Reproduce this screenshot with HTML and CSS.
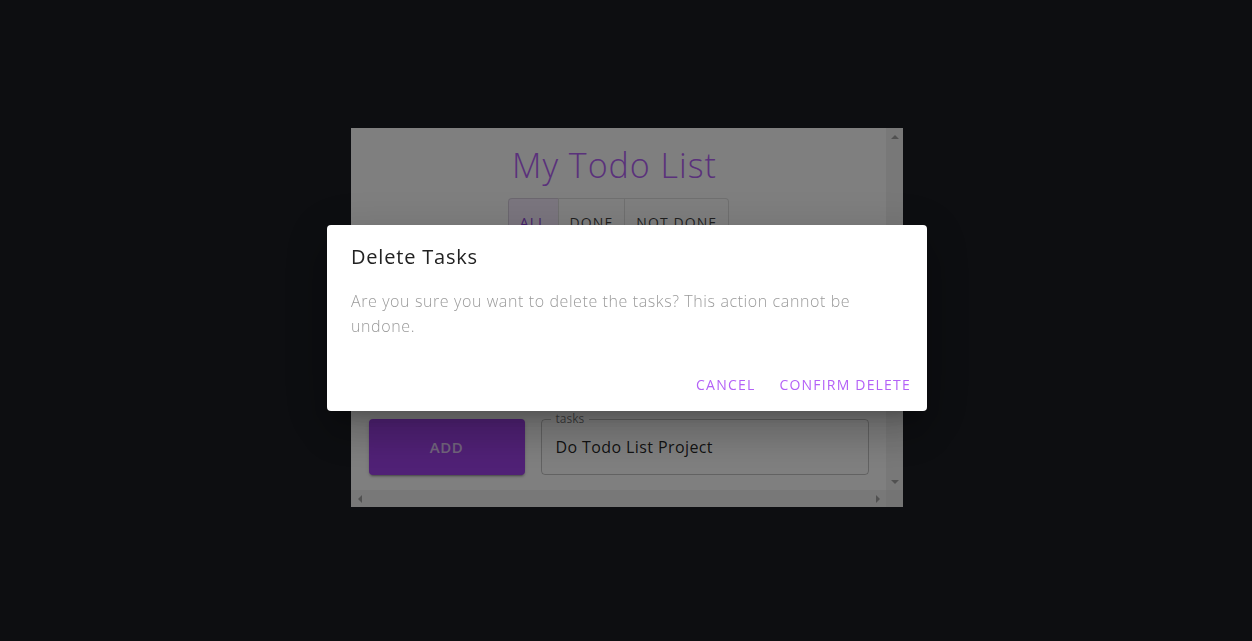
FILE: index.html
```html
<!DOCTYPE html>
<html lang="en">
<head>
<meta charset="utf-8">
<title>My Todo List</title>
<link rel="stylesheet" href="styles.css">
</head>
<body>
<main class="page">
  <section class="frame">
    <div class="frame-content">
      <h1 class="app-title">My Todo List</h1>
      <div class="toggle-group">
        <button class="toggle selected">All</button>
        <button class="toggle">Done</button>
        <button class="toggle">Not Done</button>
      </div>
      <ul class="task-list"></ul>
      <form class="add-row">
        <button type="button" class="add-btn">Add</button>
        <fieldset class="field">
          <legend class="field-label">tasks</legend>
          <span class="field-value">Do Todo List Project</span>
        </fieldset>
      </form>
    </div>
    <div class="vbar">
      <span class="arrow arrow-up"></span>
      <span class="arrow arrow-down"></span>
    </div>
    <div class="hbar">
      <span class="arrow arrow-left"></span>
      <span class="arrow arrow-right"></span>
    </div>
    <div class="corner"></div>
  </section>
</main>

<div class="backdrop">
  <div class="dialog" role="dialog">
    <h2 class="dialog-title">Delete Tasks</h2>
    <p class="dialog-text">Are you sure you want to delete the tasks? This action cannot be undone.</p>
    <div class="dialog-actions">
      <button class="text-btn">Cancel</button>
      <button class="text-btn">Confirm Delete</button>
    </div>
  </div>
</div>
</body>
</html>
```

FILE: styles.css
```css
* { box-sizing: border-box; }

html, body {
  margin: 0;
  height: 100%;
}

body {
  background: #1a1c22;
  font-family: "Open Sans", "Liberation Sans", sans-serif;
}

.page {
  min-height: 100vh;
  display: flex;
  align-items: center;
  justify-content: center;
  padding: 0 0 6px 2px;
}

.frame {
  width: 552px;
  height: 379px;
  background: #ffffff;
  display: grid;
  grid-template-columns: 1fr 17px;
  grid-template-rows: 1fr 17px;
}

.frame-content {
  display: flex;
  flex-direction: column;
  align-items: center;
  overflow: hidden;
}

.app-title {
  margin: 16px 0 0;
  padding-right: 8px;
  font-size: 34px;
  line-height: 42px;
  font-weight: 300;
  letter-spacing: 1px;
  color: #b462f7;
}

.toggle-group {
  margin-top: 12px;
  display: flex;
  border-radius: 4px;
}

.toggle {
  font-family: inherit;
  font-size: 14px;
  font-weight: 500;
  text-transform: uppercase;
  letter-spacing: 1.1px;
  height: 48px;
  padding: 0 11px;
  background: #fff;
  color: rgba(0, 0, 0, 0.75);
  border: 1px solid rgba(0, 0, 0, 0.12);
  margin-left: -1px;
}

.toggle:first-child {
  margin-left: 0;
  border-radius: 4px 0 0 4px;
}

.toggle:last-child {
  border-radius: 0 4px 4px 0;
}

.toggle.selected {
  color: #8e44d6;
  background: rgba(180, 98, 247, 0.12);
}

.task-list {
  list-style: none;
  margin: 0;
  padding: 0;
  height: 173px;
  flex: none;
}

.add-row {
  width: 500px;
  display: flex;
  gap: 16px;
  margin: 0;
}

.add-btn {
  width: 156px;
  height: 56px;
  flex: none;
  border: none;
  border-radius: 4px;
  background: #a142ec;
  color: rgba(255, 255, 255, 0.72);
  font-family: inherit;
  font-size: 15px;
  font-weight: 600;
  letter-spacing: 0.6px;
  text-transform: uppercase;
  box-shadow: 0 3px 1px -2px rgba(0,0,0,0.2), 0 2px 2px 0 rgba(0,0,0,0.14), 0 1px 5px 0 rgba(0,0,0,0.12);
}

.field {
  flex: 1;
  height: 56px;
  margin: 0;
  padding: 0 14px;
  border: 1px solid rgba(0, 0, 0, 0.23);
  border-radius: 4px;
  position: relative;
  display: flex;
  align-items: center;
  min-width: 0;
}

.field-label {
  position: absolute;
  top: -9px;
  left: 9px;
  padding: 0 5px;
  background: #fff;
  font-size: 12px;
  line-height: 16px;
  color: rgba(0, 0, 0, 0.55);
  font-weight: 400;
}

.field-value {
  font-size: 16px;
  letter-spacing: 0.4px;
  color: rgba(0, 0, 0, 0.87);
  font-weight: 400;
}

.vbar {
  background: #f1f1f1;
  display: flex;
  flex-direction: column;
  justify-content: space-between;
  align-items: center;
}

.hbar {
  background: #f1f1f1;
  display: flex;
  justify-content: space-between;
  align-items: center;
}

.corner {
  background: #e8e8e8;
}

.arrow {
  width: 17px;
  height: 17px;
  display: flex;
  align-items: center;
  justify-content: center;
}

.arrow::before {
  content: "";
  width: 0;
  height: 0;
  border: 4px solid transparent;
}

.arrow-up::before { border-bottom-color: #a3a3a3; border-top-width: 0; }
.arrow-down::before { border-top-color: #a3a3a3; border-bottom-width: 0; }
.arrow-left::before { border-right-color: #a3a3a3; border-left-width: 0; }
.arrow-right::before { border-left-color: #a3a3a3; border-right-width: 0; }

.backdrop {
  position: fixed;
  inset: 0;
  background: rgba(0, 0, 0, 0.5);
  display: flex;
  align-items: center;
  justify-content: center;
  padding: 0 0 6px 2px;
}

.dialog {
  width: 600px;
  background: #fff;
  border-radius: 4px;
  box-shadow: 0 11px 15px -7px rgba(0,0,0,0.2), 0 24px 38px 3px rgba(0,0,0,0.14), 0 9px 46px 8px rgba(0,0,0,0.12);
  display: flex;
  flex-direction: column;
}

.dialog-title {
  margin: 0;
  padding: 16px 24px;
  font-size: 20px;
  line-height: 32px;
  font-weight: 500;
  letter-spacing: 0.8px;
  color: #222;
}

.dialog-text {
  margin: 0;
  padding: 0 24px 20px;
  font-size: 16px;
  line-height: 25px;
  font-weight: 300;
  letter-spacing: 0.6px;
  color: #9a9a9a;
}

.dialog-actions {
  display: flex;
  justify-content: flex-end;
  gap: 8px;
  padding: 8px;
}

.text-btn {
  font-family: inherit;
  font-size: 14px;
  font-weight: 500;
  letter-spacing: 1.2px;
  text-transform: uppercase;
  color: #b462f7;
  background: none;
  border: none;
  padding: 6px 8px;
  min-width: 64px;
  line-height: 24px;
  border-radius: 4px;
}
```
